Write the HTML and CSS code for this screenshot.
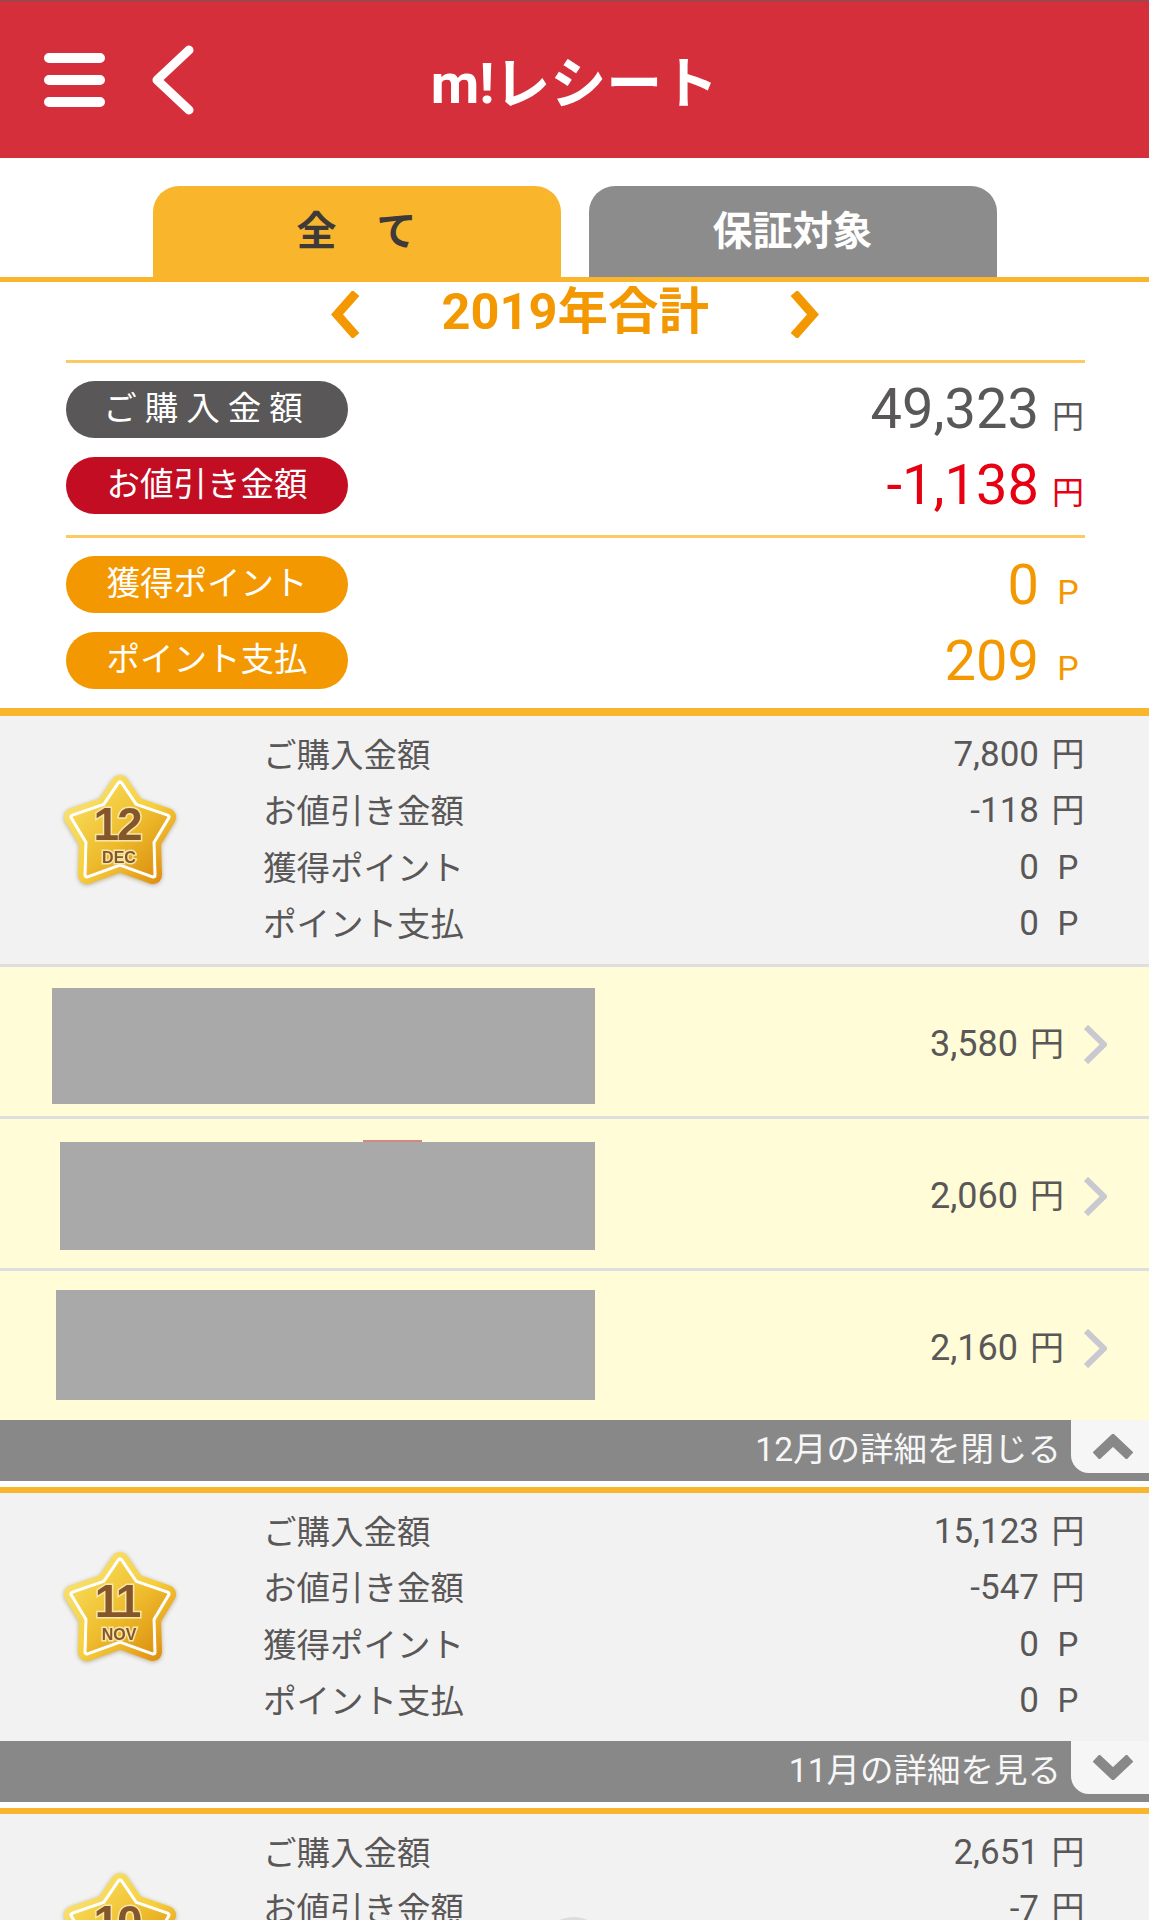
FILE: index.html
```html
<!DOCTYPE html>
<html lang="ja">

<head>
  <meta charset="UTF-8">
  <title>m!レシート</title>
  <link rel="stylesheet" href="styles.css">
</head>

<body>
  <svg class="defs" width="0" height="0">
    <defs>
      <linearGradient id="starEdge" x1="0" y1="0" x2="1" y2="1">
        <stop offset="0" stop-color="#f8e376" />
        <stop offset="0.55" stop-color="#f6cf3c" />
        <stop offset="1" stop-color="#e08f12" />
      </linearGradient>
      <linearGradient id="starFace" x1="0.1" y1="0.1" x2="0.9" y2="0.95">
        <stop offset="0" stop-color="#f8dc58" />
        <stop offset="0.55" stop-color="#eebb2c" />
        <stop offset="1" stop-color="#dd9412" />
      </linearGradient>
      <symbol id="star" viewBox="0 0 114 110">
        <polygon class="star-edge" points="57,9 72,31 104,42 89,67 90,100 57,88 24,100 25,67 10,42 42,31" />
        <polygon class="star-ring" points="57,9 72,31 104,42 89,67 90,100 57,88 24,100 25,67 10,42 42,31" />
        <polygon class="star-face" points="57,9 72,31 104,42 89,67 90,100 57,88 24,100 25,67 10,42 42,31" />
      </symbol>
    </defs>
  </svg>

  <header class="topbar">
    <svg class="menu-icon" viewBox="0 0 61 54">
      <path d="M5 5H56M5 27H56M5 49H56" />
    </svg>
    <svg class="back-icon" viewBox="0 0 42 70">
      <path d="M37 5L5 35L37 65" />
    </svg>
    <h1>m!レシート</h1>
  </header>

  <nav class="tabs">
    <div class="tab tab-active">全　て</div>
    <div class="tab">保証対象</div>
  </nav>

  <div class="year-nav">
    <svg class="year-arrow" viewBox="0 0 29 47">
      <path d="M25 2L6 23.5L25 45" />
    </svg>
    <h2>2019年合計</h2>
    <svg class="year-arrow" viewBox="0 0 29 47">
      <path d="M4 2L23 23.5L4 45" />
    </svg>
  </div>

  <section class="totals">
    <div class="total-group">
      <div class="total-row">
        <span class="pill pill-gray">ご購入金額</span>
        <span class="total-value">49,323<span class="unit">円</span></span>
      </div>
      <div class="total-row">
        <span class="pill pill-red">お値引き金額</span>
        <span class="total-value value-red">-1,138<span class="unit">円</span></span>
      </div>
    </div>
    <div class="total-group">
      <div class="total-row">
        <span class="pill pill-orange">獲得ポイント</span>
        <span class="total-value value-orange">0<span class="unit unit-point">P</span></span>
      </div>
      <div class="total-row">
        <span class="pill pill-orange">ポイント支払</span>
        <span class="total-value value-orange">209<span class="unit unit-point">P</span></span>
      </div>
    </div>
  </section>

  <section class="month">
    <div class="month-head">
      <svg class="star" viewBox="0 0 114 110">
        <use href="#star" />
        <text class="star-num" x="54" y="65">12</text>
        <text class="star-name" x="56" y="88">DEC</text>
      </svg>
      <dl class="figures">
        <dt>ご購入金額</dt>
        <dd>7,800<span class="unit">円</span></dd>
        <dt>お値引き金額</dt>
        <dd>-118<span class="unit">円</span></dd>
        <dt>獲得ポイント</dt>
        <dd>0<span class="unit">P</span></dd>
        <dt>ポイント支払</dt>
        <dd>0<span class="unit">P</span></dd>
      </dl>
    </div>
    <div class="shop-row">
      <div class="shop-slot"><div class="redacted redacted-a"></div></div>
      <span class="shop-price">3,580<span class="unit">円</span></span>
      <svg class="row-arrow" viewBox="0 0 23 39"><path d="M2 2L20 19.5L2 37" /></svg>
    </div>
    <div class="shop-row">
      <div class="shop-slot"><div class="redacted redacted-b"></div></div>
      <span class="shop-price">2,060<span class="unit">円</span></span>
      <svg class="row-arrow" viewBox="0 0 23 39"><path d="M2 2L20 19.5L2 37" /></svg>
    </div>
    <div class="shop-row">
      <div class="shop-slot"><div class="redacted redacted-c"></div></div>
      <span class="shop-price">2,160<span class="unit">円</span></span>
      <svg class="row-arrow" viewBox="0 0 23 39"><path d="M2 2L20 19.5L2 37" /></svg>
    </div>
    <div class="toggle">
      <span>12月の詳細を閉じる</span>
      <div class="toggle-btn">
        <svg viewBox="0 0 40 25"><path d="M3 22L20 6L37 22" /></svg>
      </div>
    </div>
  </section>

  <section class="month">
    <div class="month-head">
      <svg class="star" viewBox="0 0 114 110">
        <use href="#star" />
        <text class="star-num" x="54" y="65">11</text>
        <text class="star-name" x="56" y="88">NOV</text>
      </svg>
      <dl class="figures">
        <dt>ご購入金額</dt>
        <dd>15,123<span class="unit">円</span></dd>
        <dt>お値引き金額</dt>
        <dd>-547<span class="unit">円</span></dd>
        <dt>獲得ポイント</dt>
        <dd>0<span class="unit">P</span></dd>
        <dt>ポイント支払</dt>
        <dd>0<span class="unit">P</span></dd>
      </dl>
    </div>
    <div class="toggle">
      <span>11月の詳細を見る</span>
      <div class="toggle-btn">
        <svg viewBox="0 0 40 25"><path d="M3 3L20 19L37 3" /></svg>
      </div>
    </div>
  </section>

  <section class="month">
    <div class="month-head">
      <svg class="star" viewBox="0 0 114 110">
        <use href="#star" />
        <text class="star-num" x="54" y="65">10</text>
        <text class="star-name" x="56" y="88">OCT</text>
      </svg>
      <dl class="figures">
        <dt>ご購入金額</dt>
        <dd>2,651<span class="unit">円</span></dd>
        <dt>お値引き金額</dt>
        <dd>-7<span class="unit">円</span></dd>
        <dt>獲得ポイント</dt>
        <dd>0<span class="unit">P</span></dd>
        <dt>ポイント支払</dt>
        <dd>0<span class="unit">P</span></dd>
      </dl>
    </div>
  </section>

  <div class="float-btn"></div>
</body>

</html>
```

FILE: styles.css
```css
html,
body {
  height: 1920px;
  overflow: hidden;
}

body {
  position: relative;
  margin: 0;
  background-color: #fff;
  color: #595757;
  font-family: Roboto, "Noto Sans CJK JP", sans-serif;
}

h1,
h2,
dl,
dd {
  margin: 0;
}

.defs {
  display: block;
  height: 0;
}

/* header */
.topbar {
  display: flex;
  align-items: center;
  height: 157px;
  border-top: 1px solid #6e5a5c;
  background-color: #d62f3c;
  position: relative;
  padding-left: 44px;
}

.menu-icon {
  width: 61px;
  height: 54px;
}

.menu-icon path {
  fill: none;
  stroke: #fff;
  stroke-width: 10;
  stroke-linecap: round;
}

.back-icon {
  width: 42px;
  height: 70px;
  margin-left: 47px;
}

.back-icon path {
  fill: none;
  stroke: #fff;
  stroke-width: 9;
  stroke-linecap: round;
  stroke-linejoin: round;
}

.topbar h1 {
  position: absolute;
  left: 0;
  right: 0;
  top: 48px;
  text-align: center;
  color: #fff;
  font-size: 56px;
  font-weight: 700;
  line-height: 70px;
}

/* tabs */
.tabs {
  display: flex;
  justify-content: center;
  gap: 28px;
  padding-top: 28px;
  border-bottom: 5px solid #f9b62c;
}

.tab {
  width: 408px;
  height: 91px;
  border-radius: 26px 26px 0 0;
  background-color: #8c8c8c;
  color: #fff;
  font-size: 40px;
  font-weight: 700;
  line-height: 92px;
  text-align: center;
}

.tab-active {
  background-color: #f9b62c;
  color: #3e3a39;
}

/* year */
.year-nav {
  display: flex;
  justify-content: center;
  align-items: center;
  gap: 82px;
  height: 78px;
}

.year-nav h2 {
  width: 266px;
  color: #f39800;
  font-size: 50.5px;
  font-weight: 700;
  line-height: 60px;
  white-space: nowrap;
  margin-top: -18px;
}

.year-arrow {
  width: 29px;
  height: 47px;
  margin-top: -14px;
}

.year-arrow path {
  fill: none;
  stroke: #f39800;
  stroke-width: 9;
}

/* totals */
.totals {
  padding: 0 64px 19px 66px;
  border-bottom: 8px solid #f9b62c;
}

.total-group {
  display: flex;
  flex-direction: column;
  gap: 19px;
  padding: 18px 0 21px;
  border-top: 3px solid #fdca62;
}

.total-group:last-child {
  padding-bottom: 0;
}

.total-row {
  display: flex;
  justify-content: space-between;
  align-items: center;
  height: 57px;
}

.pill {
  width: 282px;
  height: 57px;
  border-radius: 29px;
  color: #fff;
  font-size: 33.5px;
  line-height: 56px;
  text-align: center;
}

.pill-gray {
  background-color: #595757;
  letter-spacing: 8px;
}

.pill-red {
  background-color: #c30d23;
}

.pill-orange {
  background-color: #f39800;
}

.total-value {
  padding-top: 8px;
  font-size: 56px;
  line-height: 57px;
}

.value-red {
  color: #e60012;
}

.value-orange {
  color: #f39800;
}

.unit {
  display: inline-block;
  width: 34px;
  margin-left: 12px;
  font-size: 32px;
  text-align: center;
}

.unit-point {
  font-size: 34px;
}

/* month blocks */
.month + .month {
  border-top: 6px solid #f9b62c;
}

.month-head {
  display: flex;
  align-items: flex-start;
  box-sizing: border-box;
  height: 248px;
  padding: 12px 64px 0 0;
  background-color: #f2f2f2;
}

.star {
  flex: none;
  width: 114px;
  height: 110px;
  margin: 47px 86px 0 63px;
  filter: drop-shadow(0 1px 2px rgba(120, 90, 30, 0.45));
}

.star-edge {
  fill: url(#starEdge);
  stroke: url(#starEdge);
  stroke-width: 18;
  stroke-linejoin: round;
}

.star-ring {
  fill: #fff;
  stroke: #fff;
  stroke-width: 7;
  stroke-linejoin: round;
}

.star-face {
  fill: url(#starFace);
  stroke: url(#starFace);
  stroke-width: 1;
  stroke-linejoin: round;
}

.star-num,
.star-name {
  fill: #85562a;
  stroke: #f7e6a6;
  stroke-width: 3px;
  paint-order: stroke;
  text-anchor: middle;
  font-family: "Liberation Sans", sans-serif;
  font-weight: 700;
}

.star-num {
  font-size: 46px;
  letter-spacing: -2px;
}

.star-name {
  font-size: 16px;
}

.figures {
  flex: 1;
  display: grid;
  grid-template-columns: 1fr auto;
  grid-auto-rows: 56.4px;
  font-size: 33.5px;
  line-height: 56.4px;
}

.figures dd {
  font-size: 35px;
  line-height: 54px;
  text-align: right;
}

.figures .unit {
  font-size: 33px;
}

.shop-row {
  display: flex;
  align-items: center;
  box-sizing: border-box;
  height: 152px;
  padding-top: 2px;
  border-top: 3px solid #dedede;
  background-color: #fffcd7;
}

.shop-slot {
  display: flex;
  justify-content: flex-end;
  width: 595px;
}

.redacted {
  position: relative;
  background-color: #a9a9a9;
}

.redacted-a {
  width: 543px;
  height: 116px;
  margin-top: 7px;
}

.redacted-b {
  width: 535px;
  height: 108px;
  margin-top: 3px;
}

.redacted-b::before {
  content: "";
  position: absolute;
  left: 303px;
  top: -2px;
  width: 59px;
  height: 2px;
  background-color: #d08a80;
}

.redacted-c {
  width: 539px;
  height: 110px;
  margin-top: -3px;
}

.shop-price {
  margin-left: auto;
  padding-top: 2px;
  font-size: 36px;
  line-height: 50px;
  white-space: nowrap;
}

.shop-price .unit {
  width: 36px;
  margin-left: 11px;
  font-size: 34px;
}

.row-arrow {
  width: 23px;
  height: 39px;
  margin: 4px 42px 0 19px;
}

.row-arrow path {
  fill: none;
  stroke: #c9c9d1;
  stroke-width: 6;
}

.toggle {
  display: flex;
  justify-content: flex-end;
  align-items: flex-start;
  height: 61px;
  margin-bottom: 6px;
  background-color: #888;
  color: #f7f7f7;
  font-size: 33.5px;
  line-height: 60px;
}

.toggle-btn {
  display: flex;
  justify-content: center;
  align-items: center;
  width: 78px;
  height: 53px;
  margin-left: 10px;
  border-bottom-left-radius: 18px;
  background-color: #f5f6f5;
}

.toggle-btn svg {
  width: 40px;
  height: 25px;
  margin-left: 6px;
}

.toggle-btn path {
  fill: none;
  stroke: #888;
  stroke-width: 10;
}

/* page-top button, only its rim shows at the bottom edge */
.float-btn {
  position: absolute;
  left: 547px;
  top: 1917px;
  width: 53px;
  height: 40px;
  border-radius: 50%;
  background-color: #dcdcdc;
}
```
